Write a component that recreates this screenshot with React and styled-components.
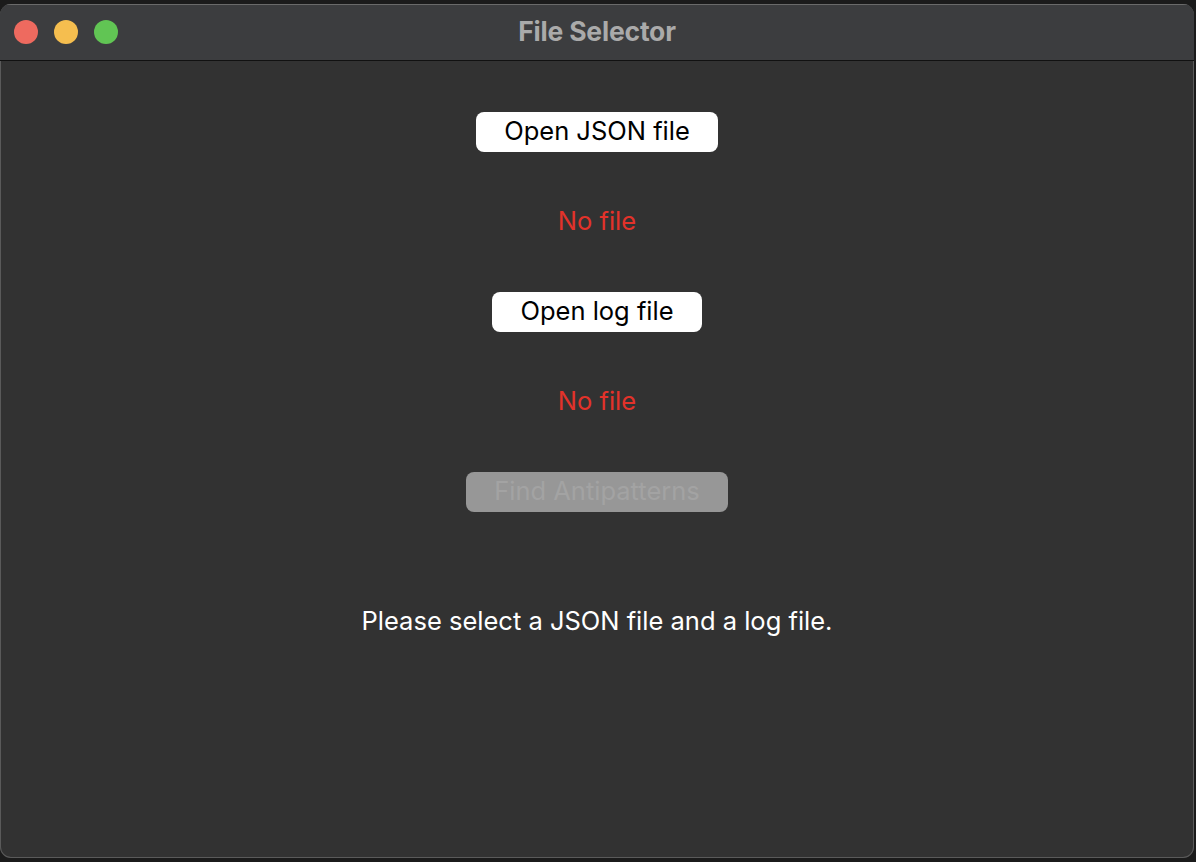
import React from 'react';
import styled, { createGlobalStyle } from 'styled-components';

const GlobalStyle = createGlobalStyle`
  html, body {
    margin: 0;
    padding: 0;
    background: #1b1b1b;
    font-family: Inter, "Noto Sans", sans-serif;
  }
`;

const Screen = styled.div`
  width: 1196px;
  height: 862px;
  padding: 4px 2px 4px 0;
  box-sizing: border-box;
`;

const Window = styled.div`
  height: 100%;
  display: flex;
  flex-direction: column;
  background: #323232;
  border-radius: 11px;
  box-shadow: inset 0 0 0 1px #5a5a5a;
  overflow: hidden;
`;

const TitleBar = styled.div`
  position: relative;
  height: 56px;
  flex: none;
  display: flex;
  align-items: center;
  justify-content: center;
  background: #3c3d3f;
  border-bottom: 1px solid #111;
  box-shadow: inset 0 1px 0 #6a6a6a;
`;

const Lights = styled.div`
  position: absolute;
  left: 14px;
  top: 16px;
  display: flex;
  gap: 16px;
`;

const Light = styled.span`
  width: 24px;
  height: 24px;
  border-radius: 50%;
  background: ${p => p.color};
`;

const Title = styled.div`
  color: #aaaaaa;
  font-size: 26.5px;
  font-weight: 700;
  letter-spacing: -0.2px;
  margin-top: -2px;
`;

const Content = styled.div`
  flex: 1;
  display: flex;
  flex-direction: column;
  align-items: center;
  padding-top: 51px;
  font-size: 25.5px;
`;

const Button = styled.button`
  height: 40px;
  padding: 0 28px 3px;
  border: none;
  border-radius: 8px;
  font-family: Inter, "Noto Sans", sans-serif;
  font-size: 25.5px;
  background: ${p => (p.disabled ? '#979797' : '#ffffff')};
  color: ${p => (p.disabled ? '#a3a3a3' : '#000000')};
  margin-bottom: ${p => p.gap ?? 50}px;
`;

const Status = styled.div`
  height: 40px;
  line-height: 38px;
  color: #e3322a;
  margin-bottom: 50px;
`;

const Message = styled.div`
  margin-top: 89px;
  height: 40px;
  line-height: 40px;
  color: #ffffff;
`;

export default function App() {
  return (
    <>
      <GlobalStyle />
      <Screen>
        <Window>
          <TitleBar>
            <Lights>
              <Light color="#ee6a5f" />
              <Light color="#f5be4f" />
              <Light color="#61c554" />
            </Lights>
            <Title>File Selector</Title>
          </TitleBar>
          <Content>
            <Button>Open JSON file</Button>
            <Status>No file</Status>
            <Button>Open log file</Button>
            <Status>No file</Status>
            <Button disabled gap={0}>Find Antipatterns</Button>
            <Message>Please select a JSON file and a log file.</Message>
          </Content>
        </Window>
      </Screen>
    </>
  );
}
